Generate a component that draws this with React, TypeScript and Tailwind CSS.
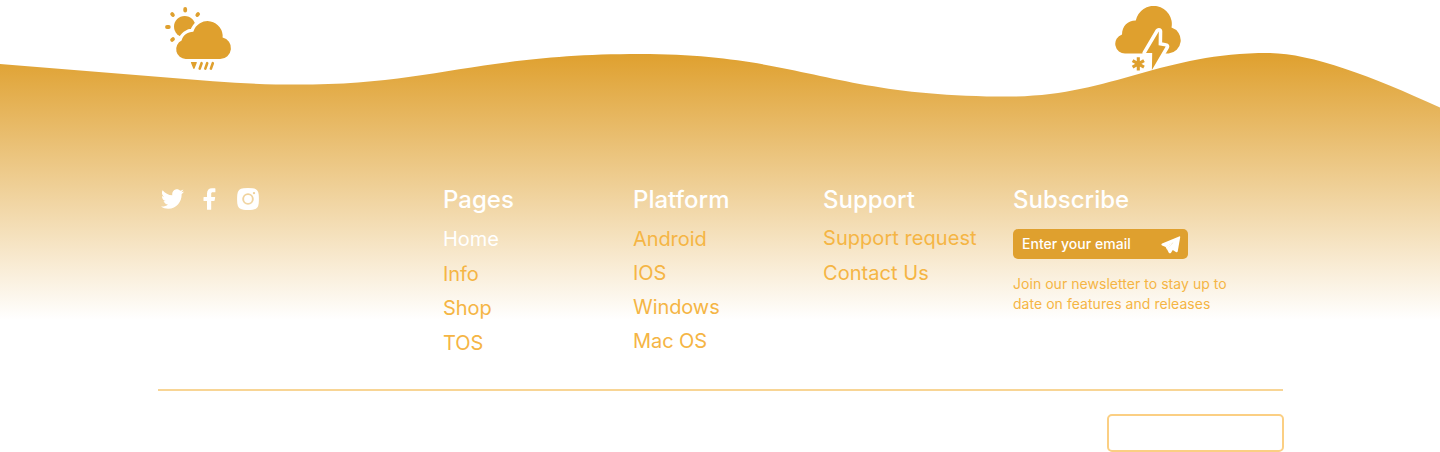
import React from "react";
import { FaTwitter } from "react-icons/fa";

const GOLD = "#dfa02e";

function SunCloud() {
  const cloud =
    "M185.7 59A9.7 9.7 0 0 1 181.6 40.6C182.8 35.5 187.4 31.9 193.3 31.8A15 15 0 0 1 222.6 37.5A10.9 10.9 0 0 1 220.2 59Z";
  return (
    <svg className="h-[66px] w-[68px]" viewBox="164 6 68 66" fill={GOLD}>
      <circle cx="184.7" cy="26.6" r="10.7" />
      <path d={cloud} stroke="#fff" strokeWidth="6.5" />
      <path d={cloud} />
      <g stroke={GOLD} strokeWidth="3.8" strokeLinecap="round">
        <path d="M185.2 9v1.6M167 27h1.8M172.1 14.1l.8.9M198.1 14.1l-.8.9M172.1 39.9l.9-.8" />
      </g>
      <path
        d="M191.6 62.6h4.6l-2.3 5.6z"
        stroke={GOLD}
        strokeWidth="1.4"
        strokeLinejoin="round"
      />
      <path
        d="M201.6 63.2l-1.9 5.4M207.2 63.2l-1.9 5.4M212.8 63.2l-1.9 5.4"
        stroke={GOLD}
        strokeWidth="2.6"
        strokeLinecap="round"
      />
    </svg>
  );
}

function StormCloud() {
  const bolt = "M1158.8 31.4L1146 53H1152.2L1151.9 70L1165.7 46.6L1158.6 45.2Z";
  return (
    <svg className="h-[66px] w-[70px]" viewBox="1114 6 70 66" fill={GOLD}>
      <path d="M1125.5 53.5A9.8 9.8 0 0 1 1122 34.4C1122 26 1128 20.4 1135.8 20.5A18 18 0 0 1 1171.5 27.6A13.3 13.3 0 0 1 1168.6 53.5Z" />
      <path d={bolt} fill="#fff" stroke="#fff" strokeWidth="7" strokeLinejoin="round" />
      <path d={bolt} />
      <path
        d="M1138.3 57.3v13.2M1132.6 60.6l11.4 6.6M1144 60.6l-11.4 6.6"
        stroke={GOLD}
        strokeWidth="3.1"
      />
    </svg>
  );
}

function Wave() {
  return (
    <svg
      className="absolute inset-x-0 top-0 h-[452px] w-full"
      viewBox="0 0 1440 452"
      preserveAspectRatio="none"
      aria-hidden="true"
    >
      <defs>
        <linearGradient id="sky" gradientUnits="userSpaceOnUse" x1="0" y1="53" x2="0" y2="320">
          <stop offset="0" stopColor={GOLD} />
          <stop offset="1" stopColor="#fff" />
        </linearGradient>
      </defs>
      <path
        fill="url(#sky)"
        d="M0 64L213 81.3C420 96.5 450 54 640 54C800 54 830 96.5 1009 96.5C1110 96.5 1160 53 1268 53C1310 53 1370 75.5 1440 107.5V320H0Z"
      />
    </svg>
  );
}

function Facebook() {
  return (
    <svg className="h-[22px] w-[13px]" viewBox="0 0 13 22" fill="#fff">
      <path d="M4.5 21.7a.5.5 0 0 1-.5-.5V12.9H1a.5.5 0 0 1-.5-.5V9.4a.5.5 0 0 1 .5-.5h3V5.5C4 2 6 .3 9 .3h2.9a.5.5 0 0 1 .5.5v3a.5.5 0 0 1-.5.5H9.7c-1 0-1.5.5-1.5 1.5v3.1h3.5c.4 0 .6.3.5.6l-.6 3a.5.5 0 0 1-.5.4H8.2v8.3a.5.5 0 0 1-.5.5z" />
    </svg>
  );
}

function Instagram() {
  return (
    <svg className="h-[22px] w-[22px]" viewBox="0 0 22 22">
      <path
        fill="#fff"
        fillRule="evenodd"
        d="M6.5.3Q11-.1 15.5.3Q21.2.8 21.7 6.5Q22.1 11 21.7 15.5Q21.2 21.2 15.5 21.7Q11 22.1 6.5 21.7Q.8 21.2.3 15.5Q-.1 11 .3 6.5Q.8.8 6.5.3ZM11 5.2a5.8 5.8 0 1 0 0 11.6a5.8 5.8 0 0 0 0-11.6ZM17 3.9a1.2 1.2 0 1 0 0 2.4a1.2 1.2 0 0 0 0-2.4Z"
      />
      <circle cx="11" cy="11" r="3.9" fill="#fff" />
    </svg>
  );
}

type ColumnProps = {
  title: string;
  links: string[];
  className: string;
  active?: string;
};

function Column({ title, links, className, active }: ColumnProps) {
  return (
    <div className="w-[190px] shrink-0">
      <h2 className="text-2xl leading-8 font-medium text-white">{title}</h2>
      <ul className={className}>
        {links.map((link) => (
          <li
            key={link}
            className={
              link === active
                ? "text-xl leading-6 whitespace-nowrap text-white"
                : "text-xl leading-6 whitespace-nowrap text-[#f5b544]"
            }
          >
            {link}
          </li>
        ))}
      </ul>
    </div>
  );
}

export default function App() {
  return (
    <footer className="relative h-[452px] w-full overflow-hidden bg-white font-['Inter',sans-serif]">
      <div className="flex justify-between pt-1.5 pr-64 pl-[164px]">
        <SunCloud />
        <StormCloud />
      </div>
      <Wave />
      <div className="relative mt-28 mr-[157px] ml-[158px]">
        <div className="flex h-[205px]">
          <div className="flex w-[285px] shrink-0 items-start pt-1 pl-[2.5px]">
            <FaTwitter className="-mt-px h-6 w-[23px] text-white" preserveAspectRatio="none" />
            <div className="ml-[19.5px]">
              <Facebook />
            </div>
            <div className="ml-[21px]">
              <Instagram />
            </div>
          </div>
          <Column
            title="Pages"
            links={["Home", "Info", "Shop", "TOS"]}
            active="Home"
            className="mt-[11px] flex flex-col gap-[10.6px] tracking-[-0.05px]"
          />
          <Column
            title="Platform"
            links={["Android", "IOS", "Windows", "Mac OS"]}
            className="mt-[11px] flex flex-col gap-2.5 tracking-[-0.08px]"
          />
          <Column
            title="Support"
            links={["Support request", "Contact Us"]}
            className="mt-2.5 flex flex-col gap-[11px] tracking-[0.05px]"
          />
          <div>
            <h2 className="text-2xl leading-8 font-medium text-white">Subscribe</h2>
            <div className="mt-[13px] flex h-[30px] w-[175px] items-center justify-between rounded-[5px] bg-[#dfa02e] pr-[7.5px] pl-[9px]">
              <span className="text-sm font-medium tracking-[0.03px] text-white">
                Enter your email
              </span>
              <svg className="mt-px h-[18px] w-[19.5px]" viewBox="0 0 20 18.5" fill="#fff">
                <path d="M18.6.4Q19.9 0 19.7 1.4L17.2 15.6Q16.8 17.4 15.2 16.4L12.1 14.4L10.3 17.2Q9.2 18.5 8 17.2L5.9 13.2L12.8 6.3L4.8 11.2L1.1 9.7Q-.4 8.7 1.1 7.6Z" />
                <path d="M4.6 11L13 6L6 14Z" />
              </svg>
            </div>
            <p className="mt-[15px] w-[240px] text-sm leading-5 tracking-[0.04px] text-[#f5b544]">
              Join our newsletter to stay up to
              <br />
              date on features and releases
            </p>
          </div>
        </div>
        <div className="h-0.5 bg-[#f8d595]" />
        <div className="mt-[23px] -mr-px ml-auto h-[38px] w-[177px] rounded-[5px] border-2 border-[#fbcf83]" />
      </div>
    </footer>
  );
}
